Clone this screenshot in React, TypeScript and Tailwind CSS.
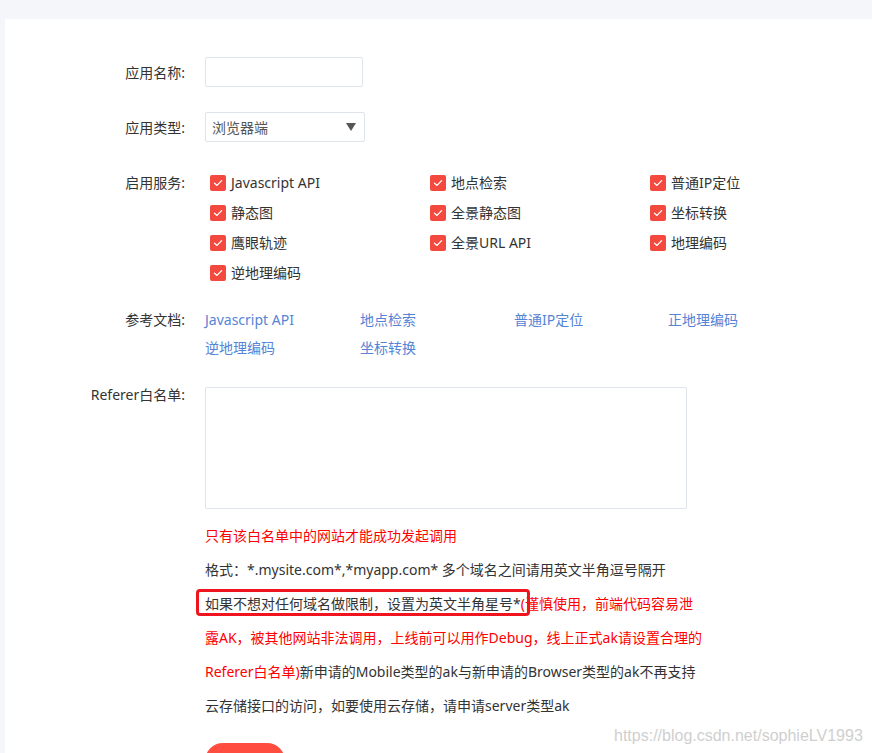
import React from "react";

const font = { fontFamily: '"Noto Sans", "Noto Sans CJK SC", sans-serif' };

function Check() {
  return (
    <span className="flex h-4 w-4 shrink-0 items-center justify-center rounded-[2px] bg-[#f4493f]">
      <svg width="10" height="8" viewBox="0 0 10 8" fill="none">
        <path d="M1.5 4.2 L4 6.4 L8.6 1.6" stroke="white" strokeWidth="1.3" strokeLinecap="round" strokeLinejoin="round" />
      </svg>
    </span>
  );
}

const services = [
  "Javascript API", "地点检索", "普通IP定位",
  "静态图", "全景静态图", "坐标转换",
  "鹰眼轨迹", "全景URL API", "地理编码",
  "逆地理编码",
];

const docs = ["Javascript API", "地点检索", "普通IP定位", "正地理编码", "逆地理编码", "坐标转换"];

function Label({ children }: { children: React.ReactNode }) {
  return <div className="w-[181px] shrink-0 pr-[1px] text-right text-[14px] text-[#333]">{children}</div>;
}

export default function App() {
  return (
    <div className="relative min-h-[753px] overflow-hidden bg-[#f5f6fa] pl-[5px] pt-[19px]" style={font}>
      <div className="min-h-[800px] bg-white pt-[38px] text-[14px] text-[#333]">
        {/* 应用名称 */}
        <div className="flex items-center gap-[19px]">
          <Label>应用名称:</Label>
          <div className="h-[30px] w-[158px] rounded-[2px] border border-[#dfe3ea] bg-white" />
        </div>
        {/* 应用类型 */}
        <div className="mt-[25px] flex items-center gap-[19px]">
          <Label>应用类型:</Label>
          <div className="flex h-[30px] w-[160px] items-center justify-between rounded-[2px] border border-[#dfe3ea] bg-white pl-[6px] pr-[8px]">
            <span className="text-[14px] text-[#555]">浏览器端</span>
            <svg width="10" height="8" viewBox="0 0 10 8"><path d="M0 0 H10 L5 8 Z" fill="#555" /></svg>
          </div>
        </div>
        {/* 启用服务 */}
        <div className="mt-[26px] flex items-start gap-[19px]">
          <div className="leading-[30px]"><Label>启用服务:</Label></div>
          <div className="grid grid-cols-[220px_220px_220px] pl-[5px]">
            {services.map((s) => (
              <div key={s} className="flex h-[30px] items-center gap-[5px]">
                <Check />
                <span className="leading-[30px]">{s}</span>
              </div>
            ))}
          </div>
        </div>
        {/* 参考文档 */}
        <div className="mt-[18px] flex items-start gap-[19px]">
          <div className="leading-[28px]"><Label>参考文档:</Label></div>
          <div className="grid grid-cols-[155px_154px_154px_154px] text-[#5584d6]">
            {docs.map((d) => (
              <div key={d} className="h-[28px] leading-[28px]">{d}</div>
            ))}
          </div>
        </div>
        {/* Referer */}
        <div className="mt-[25px] flex items-start gap-[19px]">
          <div className="-mt-[2px] leading-[20px]"><Label>Referer白名单:</Label></div>
          <div>
            <div className="h-[122px] w-[482px] rounded-[2px] border border-[#dfe3ea] bg-white" />
            <div className="mt-[10px] leading-[34px]">
              <div className="text-[#ff0000]">只有该白名单中的网站才能成功发起调用</div>
              <div>格式：*.mysite.com*,*myapp.com* 多个域名之间请用英文半角逗号隔开</div>
              <div className="whitespace-nowrap">
                <span className="relative">
                  如果不想对任何域名做限制，设置为英文半角星号*
                  <span className="pointer-events-none absolute -left-[9px] -right-[9px] top-[-5px] h-[27px] rounded-[4px] border-[3px] border-[#f0141e]" />
                </span>
                <span className="text-[#ff0000]">(谨慎使用，前端代码容易泄</span>
              </div>
              <div className="whitespace-nowrap text-[#ff0000]">露AK，被其他网站非法调用，上线前可以用作Debug，线上正式ak请设置合理的</div>
              <div className="whitespace-nowrap">
                <span className="text-[#ff0000]">Referer白名单)</span>新申请的Mobile类型的ak与新申请的Browser类型的ak不再支持
              </div>
              <div className="whitespace-nowrap">云存储接口的访问，如要使用云存储，请申请server类型ak</div>
            </div>
            <div className="mt-[20px] h-[36px] w-[80px] rounded-[18px] bg-[#ff4d3f]" />
          </div>
        </div>
      </div>
      <div
        className="pointer-events-none absolute left-[614px] top-[724px] text-[16px] text-[#cfcfcf]"
        style={{ fontFamily: '"Liberation Sans", Arial, sans-serif' }}
      >
        https://blog.csdn.net/sophieLV1993
      </div>
    </div>
  );
}
